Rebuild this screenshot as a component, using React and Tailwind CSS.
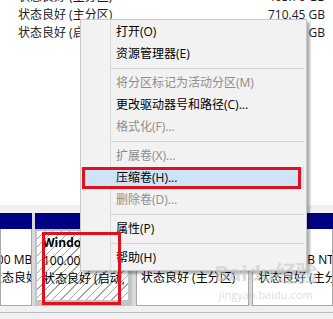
import React from 'react';

const font = { fontFamily: '"Open Sans", "Noto Sans CJK SC", sans-serif' };

const listRows = [
  { status: '状态良好 (主分区)', size: '465.76 GB' },
  { status: '状态良好 (主分区)', size: '710.45 GB' },
  { status: '状态良好 (启动, 页面文件, 故障转储, 主分区)', size: '118.09 GB' },
];

const menuGroups = [
  [
    { label: '打开(O)' },
    { label: '资源管理器(E)' },
  ],
  [
    { label: '将分区标记为活动分区(M)', disabled: true },
    { label: '更改驱动器号和路径(C)...' },
    { label: '格式化(F)...', disabled: true },
  ],
  [
    { label: '扩展卷(X)...', disabled: true },
    { label: '压缩卷(H)...', active: true },
    { label: '删除卷(D)...', disabled: true },
  ],
  [{ label: '属性(P)' }],
  [{ label: '帮助(H)' }],
];

function DiskBox({ width, lines, selected, shift = 0 }) {
  return (
    <div className="flex flex-col shrink-0 overflow-hidden" style={{ width }}>
      <div className="h-[16px] bg-[#000082]" />
      {selected ? (
        <div className="flex-1 bg-[#c4c4c4] pl-[2px] pr-[4px] pb-[6px] pt-[2px]">
          <div className="h-full bg-[repeating-linear-gradient(135deg,#ffffff_0px,#ffffff_5px,#a6a6a6_5px,#a6a6a6_6px)] pt-[3px] pl-[6px] overflow-hidden">
            <Lines lines={lines} />
          </div>
        </div>
      ) : (
        <div className="flex-1 bg-white border border-t-0 border-[#a8a8a8] pt-[4px] overflow-hidden">
          <div style={{ marginLeft: shift }}>
            <Lines lines={lines} />
          </div>
        </div>
      )}
    </div>
  );
}

function Lines({ lines }) {
  return (
    <div className="whitespace-nowrap text-[12px] leading-[18px] text-black">
      {lines.map((l, i) => (
        <div key={i} className={`h-[18px] ${i === 0 ? 'font-bold' : ''}`}>{l}</div>
      ))}
    </div>
  );
}

export default function App() {
  return (
    <div className="relative w-[333px] h-[319px] overflow-hidden bg-white" style={font}>
      {/* volume list */}
      <div className="h-[205px] overflow-hidden">
        <div className="-mt-[12px]">
          {listRows.map((r, i) => (
            <div key={i} className="flex justify-between h-[18px] items-center pl-[18px] pr-[8px] text-[12px] text-[#1a1a1a] whitespace-nowrap">
              <span>{r.status}</span>
              <span>{r.size}</span>
            </div>
          ))}
        </div>
      </div>

      <div className="h-[8px] bg-[#f0f0f0]" />

      {/* disk map */}
      <div className="flex h-[93px] bg-[#d9d9d9]">
        <DiskBox width={32} shift={-11} lines={['', '500 MB NTFS', '状态良好 (系统, 活动, 主分区)']} />
        <div className="w-[3px] shrink-0" />
        <DiskBox width={97} selected lines={['Windows (C:)', '100.00 GB NTFS', '状态良好 (启动, 页面文件)']} />
        <div className="w-[4px] shrink-0" />
        <DiskBox width={113} shift={4} lines={['', '465.76 GB NTFS', '状态良好 (主分区)']} />
        <div className="w-[3px] shrink-0" />
        <DiskBox width={81} shift={5} lines={['', '710.45 GB NTFS', '状态良好 (主分区)']} />
      </div>
      <div className="h-[7px] bg-[#f0f0f0] border-b border-[#b8b8b8]" />
      <div className="h-[10px] bg-[#f0f0f0]" />

      {/* context menu */}
      <div className="absolute left-[80px] top-[19px] w-[227px] h-[252px] bg-[#f2f2f2] border border-[#c8c8c8] shadow-[3px_3px_2px_rgba(0,0,0,0.3)] pt-[1px]">
        <div className="absolute left-[29px] top-0 bottom-0 w-px bg-[#dadada]" />
        {menuGroups.map((group, gi) => (
          <React.Fragment key={gi}>
            {gi > 0 && (
              <div className="h-[7px] flex items-center pl-[30px] pr-[2px]">
                <div className="h-px w-full bg-[#d4d4d4]" />
              </div>
            )}
            {group.map((item) => (
              <div
                key={item.label}
                className={`relative h-[22px] flex items-center pl-[33px] text-[12px] whitespace-nowrap mx-[2px] ${
                  item.active ? 'bg-[#cde4f7]' : ''
                } ${item.disabled ? 'text-[#8d8d8d]' : 'text-black'}`}
              >
                {item.label}
              </div>
            ))}
          </React.Fragment>
        ))}
      </div>

      {/* watermark */}
      <div className="absolute left-[214px] top-[258px] flex flex-col items-center whitespace-nowrap text-[rgba(200,200,200,0.6)] pointer-events-none">
        <div className="text-[22px] font-bold leading-[28px] tracking-tight">Baidu经验</div>
        <div className="text-[11px] leading-[14px] mt-[2px]">jingyan.baidu.com</div>
      </div>

      {/* annotation boxes */}
      <div className="absolute left-[82px] top-[167px] w-[219px] h-[22px] border-[3px] border-[#e2101c]" />
      <div className="absolute left-[42px] top-[232px] w-[79px] h-[73px] border-[3px] border-[#e2101c]" />
    </div>
  );
}
